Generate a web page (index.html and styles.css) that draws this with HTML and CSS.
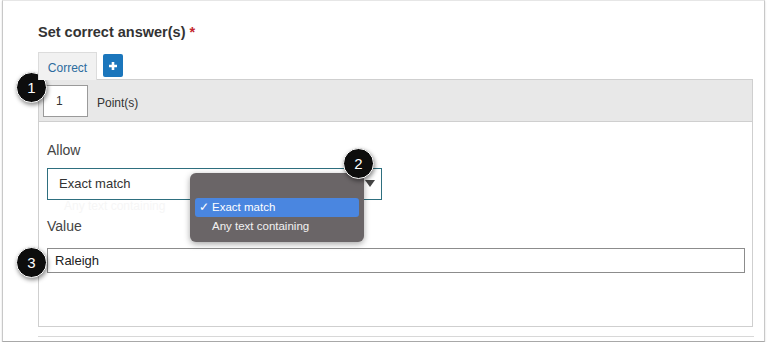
FILE: index.html
```html
<!DOCTYPE html>
<html>
<head>
<meta charset="utf-8">
<link rel="stylesheet" href="styles.css">
</head>
<body>
<div class="frame">
  <h2 class="title">Set correct answer(s) <span class="req">*</span></h2>
  <div class="tabs">
    <div class="tab">Correct</div>
    <div class="add"><svg width="10" height="10" viewBox="0 0 10 10"><path d="M5 1v8M1 5h8" stroke="#fff" stroke-width="2.6"/></svg></div>
  </div>
  <div class="points">
    <div class="num">1</div>
    <span class="pts-label">Point(s)</span>
  </div>
  <div class="body">
    <div class="label">Allow</div>
    <div class="select">
      <span>Exact match</span>
      <span class="arrow"></span>
      <span class="ghost">Any text containing</span>
    </div>
    <div class="label value-label">Value</div>
    <div class="text-input">Raleigh</div>
  </div>
  <div class="bottom-line"></div>

  <div class="menu">
    <div class="opt sel"><span class="check">✓</span>Exact match</div>
    <div class="opt">Any text containing</div>
  </div>

  <div class="callout c1">1</div>
  <div class="callout c2">2</div>
  <div class="callout c3">3</div>
</div>
</body>
</html>
```

FILE: styles.css
```css
* { box-sizing: border-box; }
html, body { margin: 0; padding: 0; background: #fff; }
body { font-family: "Liberation Sans", Arial, sans-serif; color: #333; }

.frame {
  position: relative;
  margin: 0 2px;
  height: 342px;
  border: 1px solid #c8c8c8;
  border-top-color: #e6e6e6;
  border-bottom-color: #a8a8a8;
  box-shadow: 0 1px 2px rgba(0,0,0,0.15);
  padding: 23px 11px 0 35px;
}

.title {
  margin: 0 0 11px 0;
  font-size: 14.5px;
  font-weight: bold;
  color: #333;
  line-height: 17px;
}
.req { color: #c4262e; }

.tabs { display: flex; align-items: flex-end; height: 27px; }
.tab {
  width: 59px;
  height: 28px;
  background: #f1f1f1;
  border: 1px solid #dcdcdc;
  border-bottom: none;
  color: #2c6c9e;
  font-size: 12px;
  line-height: 30px;
  text-align: center;
  margin-bottom: -1px;
  position: relative;
  z-index: 1;
}
.add {
  width: 20px;
  height: 23px;
  margin-left: 6px;
  margin-bottom: 2px;
  background: #1b76bc;
  border-radius: 2px;
  display: flex;
  align-items: center;
  justify-content: center;
}

.points {
  display: flex;
  align-items: center;
  height: 43px;
  background: #e8e8e8;
  border: 1px solid #cfcfcf;
  padding-left: 4px;
}
.num {
  width: 45px;
  height: 32px;
  background: #fff;
  border: 1px solid #9a9a9a;
  font-size: 12px;
  line-height: 30px;
  padding-left: 12px;
  color: #333;
}
.pts-label { margin-left: 9px; font-size: 12px; color: #333; padding-top: 4px; }

.body {
  height: 205px;
  border: 1px solid #cfcfcf;
  border-top: none;
  padding: 20px 8px 0 8px;
}
.label { font-size: 14px; color: #444; line-height: 16px; }
.select {
  position: relative;
  margin-top: 10px;
  width: 335px;
  height: 32px;
  border: 1px solid #2e6f7f;
  font-size: 13px;
  color: #333;
  line-height: 30px;
  padding-left: 11px;
}
.arrow {
  position: absolute;
  right: 6px;
  top: 11px;
  width: 0; height: 0;
  border-left: 5px solid transparent;
  border-right: 5px solid transparent;
  border-top: 7px solid #444;
}
.ghost {
  position: absolute;
  left: 16px;
  top: 22px;
  font-size: 12px;
  color: #f6f6f6;
}
.value-label { margin-top: 18px; }
.text-input {
  margin-top: 14px;
  width: 698px;
  height: 25px;
  border: 1px solid #8c8c8c;
  font-size: 13px;
  line-height: 23px;
  padding-left: 7px;
  color: #222;
}

.bottom-line {
  margin-top: 9px;
  height: 1px;
  background: #d8d8d8;
  width: 716px;
}

.menu {
  position: absolute;
  left: 187px;
  top: 172px;
  width: 174px;
  height: 69px;
  background: #6a6567;
  border-radius: 6px;
  box-shadow: 0 2px 6px rgba(0,0,0,0.35);
  padding: 25px 5px 0 5px;
}
.opt {
  height: 19px;
  font-size: 11.5px;
  color: #f2f2f2;
  line-height: 19px;
  padding-left: 17px;
  border-radius: 3px;
  position: relative;
}
.opt.sel { background: #4a86e0; color: #fff; }
.check { position: absolute; left: 4px; top: 0; font-size: 12px; }

.callout {
  position: absolute;
  width: 31px;
  height: 31px;
  border-radius: 50%;
  background: #0d0d0d;
  border: 1px solid #fff;
  box-shadow: 1px 2px 4px rgba(0,0,0,0.45);
  color: #fff;
  font-size: 15px;
  text-align: center;
  line-height: 29px;
}
.c1 { left: 13px; top: 71px; }
.c2 { left: 340px; top: 147px; }
.c3 { left: 13px; top: 246px; }
```
